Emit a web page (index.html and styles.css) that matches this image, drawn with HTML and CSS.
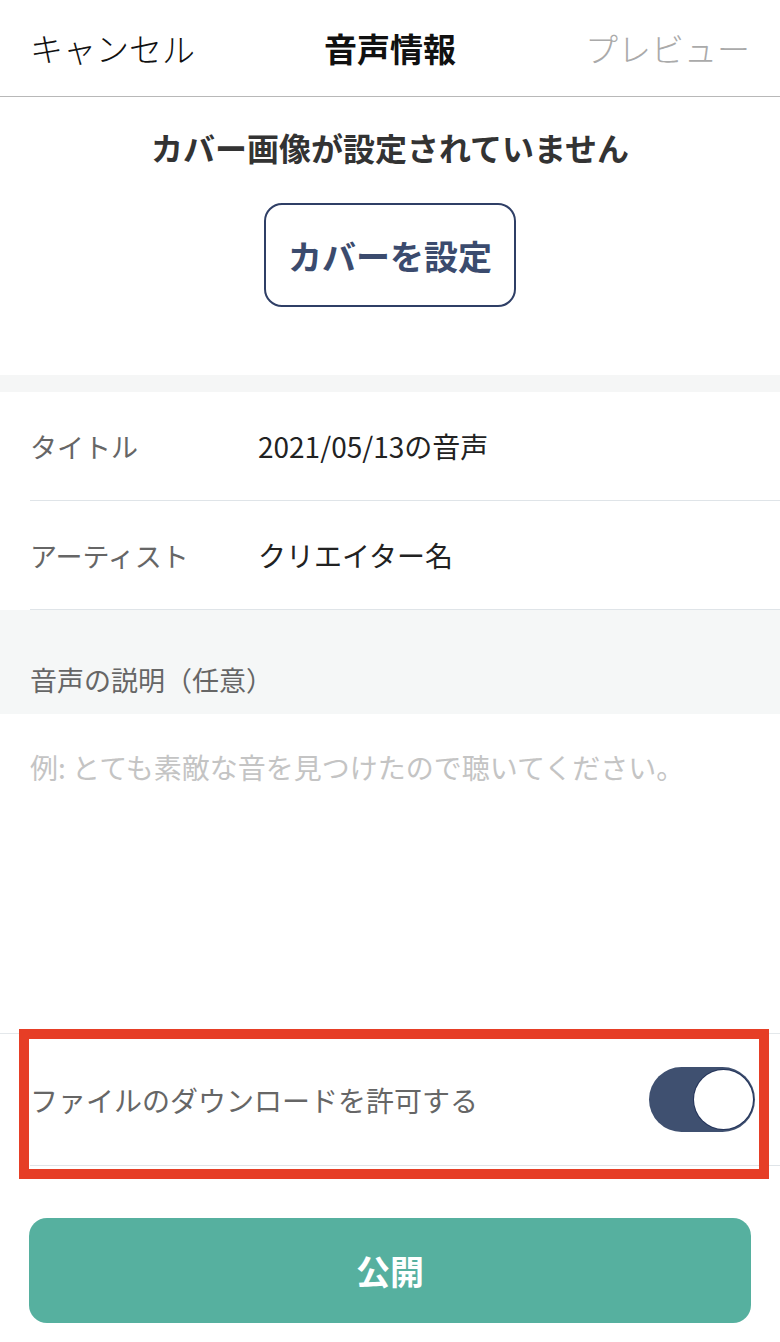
FILE: index.html
```html
<!DOCTYPE html>
<html lang="ja">
<head>
<meta charset="UTF-8" />
<title>音声情報</title>
<link rel="stylesheet" href="styles.css">
</head>
<body>

<header class="nav">
  <span class="nav-cancel">キャンセル</span>
  <span class="nav-title">音声情報</span>
  <span class="nav-preview">プレビュー</span>
</header>

<section class="cover">
  <p class="cover-empty">カバー画像が設定されていません</p>
  <button class="cover-btn" type="button">カバーを設定</button>
</section>

<div class="band"></div>

<div class="fields">
  <div class="field">
    <span class="field-label">タイトル</span>
    <span class="field-value">2021/05/13の音声</span>
  </div>
  <div class="field">
    <span class="field-label">アーティスト</span>
    <span class="field-value">クリエイター名</span>
  </div>
</div>

<div class="desc-head">音声の説明（任意）</div>
<div class="desc-body">例: とても素敵な音を見つけたので聴いてください。</div>

<div class="download">
  <div class="download-row">
    <span class="download-label">ファイルのダウンロードを許可する</span>
    <span class="toggle"><span class="toggle-thumb"></span></span>
  </div>
  <div class="highlight"></div>
</div>

<div class="publish-wrap">
  <button class="publish" type="button">公開</button>
</div>

</body>
</html>
```

FILE: styles.css
```css
body {
  margin: 0;
  background: #fff;
  font-family: "Noto Sans CJK JP", "Noto Sans", sans-serif;
  color: #222;
}
.nav {
  height: 96px;
  display: flex;
  align-items: center;
  justify-content: space-between;
  padding: 0 30px;
  border-bottom: 1px solid #b8b8b8;
  font-size: 33px;
}
.nav-cancel {
  color: #111;
  font-weight: 300;
}
.nav-title {
  font-weight: 700;
  color: #111;
}
.nav-preview {
  color: #aaa;
  font-weight: 300;
}
.cover {
  display: flex;
  flex-direction: column;
  align-items: center;
  padding: 28px 0 68px;
}
.cover-empty {
  margin: 0 0 33px;
  font-size: 32px;
  line-height: 45px;
  font-weight: 700;
  color: #333;
}
.cover-btn {
  width: 252px;
  height: 104px;
  background: #fff;
  border: 2px solid #2f3f66;
  border-radius: 18px;
  font-family: inherit;
  font-size: 34px;
  font-weight: 700;
  color: #3b4b6e;
}
.band {
  height: 17px;
  background: #f5f6f6;
}
.fields {
  padding-left: 30px;
}
.field {
  height: 108px;
  display: flex;
  align-items: center;
  border-bottom: 1px solid #dfe4e8;
  font-size: 27px;
}
.field-label {
  width: 228px;
  color: #666;
}
.field-value {
  color: #222;
  font-size: 28px;
}
.desc-head {
  height: 104px;
  box-sizing: border-box;
  padding: 50px 30px 0;
  background: #f5f7f7;
  font-size: 27px;
  line-height: 40px;
  color: #666;
}
.desc-body {
  height: 320px;
  box-sizing: border-box;
  padding: 33px 30px 0;
  font-size: 28px;
  line-height: 40px;
  color: #c4c4c4;
  border-bottom: 1px solid #e4e8eb;
}
.download {
  position: relative;
  padding-left: 30px;
}
.download-row {
  height: 131px;
  display: flex;
  align-items: center;
  justify-content: space-between;
  padding-right: 25px;
  border-bottom: 1px solid #dfe4e8;
}
.download-label {
  font-size: 28px;
  color: #666;
}
.toggle {
  width: 106px;
  height: 65px;
  border-radius: 33px;
  background: #3f5070;
  display: flex;
  align-items: center;
  justify-content: flex-end;
  padding-right: 2px;
  box-sizing: border-box;
}
.toggle-thumb {
  width: 59px;
  height: 59px;
  border-radius: 50%;
  background: #fff;
  box-shadow: 0 0 0 1px #24345a;
}
.highlight {
  position: absolute;
  left: 19px;
  top: -5px;
  width: 730px;
  height: 130px;
  border: 10px solid #e63e26;
  pointer-events: none;
}
.publish-wrap {
  padding: 52px 29px 0;
}
.publish {
  display: block;
  width: 722px;
  height: 105px;
  border: none;
  border-radius: 18px;
  background: #56b09f;
  color: #fff;
  font-family: inherit;
  font-size: 34px;
  font-weight: 700;
}
```
